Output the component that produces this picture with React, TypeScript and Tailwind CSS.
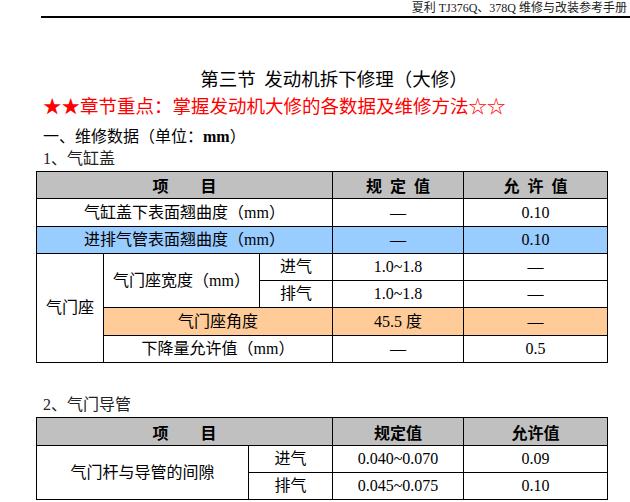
import React from "react";

const serif = "font-['Liberation_Serif','Noto_Sans_CJK_SC',serif]";
const hei = "font-['Noto_Sans_CJK_SC','Liberation_Sans',sans-serif]";

const cell = "border border-black text-center align-middle p-0";

const App = () => {
  return (
    <div className="w-[630px] h-[502px] bg-white overflow-hidden text-black">
      <div
        className={`ml-[41px] h-[18px] border-b-2 border-black flex items-start justify-end pr-[3px] text-[12px] leading-[17px] text-[#222] ${serif}`}
      >
        夏利 TJ376Q、378Q 维修与改装参考手册
      </div>

      <h1 className={`mt-[48px] ml-[41px] mr-[3px] h-6 leading-6 text-center text-[18.5px] font-normal ${hei}`}>
        第三节&nbsp;&nbsp;发动机拆下修理（大修）
      </h1>
      <p className={`ml-[43px] mt-[3px] h-6 leading-6 text-[18.5px] text-[#ff0000] ${hei}`}>
        ★★章节重点：掌握发动机大修的各数据及维修方法☆☆
      </p>
      <p className={`ml-[43px] mt-[6px] h-6 leading-6 text-[16px] ${hei}`}>
        一、维修数据（单位：<span className={`font-bold ${serif}`}>mm</span>）
      </p>
      <p className={`ml-[43px] h-6 leading-6 text-[16px] text-[#222] ${serif}`}>1、气缸盖</p>

      <table className={`ml-[36px] w-[571px] table-fixed border-collapse text-[16px] ${serif}`}>
        <colgroup>
          <col className="w-[67px]" />
          <col className="w-[156px]" />
          <col className="w-[73px]" />
          <col className="w-[131px]" />
          <col className="w-[144px]" />
        </colgroup>
        <tbody>
          <tr className={`h-[27px] bg-[#c0c0c0] font-bold ${hei}`}>
            <td colSpan={3} className={cell}>项　　目</td>
            <td className={cell}>规&ensp;定&ensp;值</td>
            <td className={cell}>允&ensp;许&ensp;值</td>
          </tr>
          <tr className="h-[28px]">
            <td colSpan={3} className={cell}>气缸盖下表面翘曲度（mm）</td>
            <td className={cell}>—</td>
            <td className={cell}>0.10</td>
          </tr>
          <tr className="h-[27px] bg-[#99ccff]">
            <td colSpan={3} className={cell}>进排气管表面翘曲度（mm）</td>
            <td className={cell}>—</td>
            <td className={cell}>0.10</td>
          </tr>
          <tr className="h-[27px]">
            <td rowSpan={4} className={cell}>气门座</td>
            <td rowSpan={2} className={cell}>气门座宽度（mm）</td>
            <td className={cell}>进气</td>
            <td className={cell}>1.0~1.8</td>
            <td className={cell}>—</td>
          </tr>
          <tr className="h-[27px]">
            <td className={cell}>排气</td>
            <td className={cell}>1.0~1.8</td>
            <td className={cell}>—</td>
          </tr>
          <tr className="h-[28px]">
            <td colSpan={2} className={`${cell} bg-[#ffcc99]`}>气门座角度</td>
            <td className={`${cell} bg-[#ffcc99]`}>45.5 度</td>
            <td className={`${cell} bg-[#ffcc99]`}>—</td>
          </tr>
          <tr className="h-[27px]">
            <td colSpan={2} className={cell}>下降量允许值（mm）</td>
            <td className={cell}>—</td>
            <td className={cell}>0.5</td>
          </tr>
        </tbody>
      </table>

      <p className={`ml-[43px] mt-[30px] h-6 leading-6 text-[16px] text-[#222] ${serif}`}>2、气门导管</p>

      <table className={`ml-[36px] w-[571px] table-fixed border-collapse text-[16px] ${serif}`}>
        <colgroup>
          <col className="w-[212px]" />
          <col className="w-[84px]" />
          <col className="w-[131px]" />
          <col className="w-[144px]" />
        </colgroup>
        <tbody>
          <tr className={`h-[28px] bg-[#c0c0c0] font-bold ${hei}`}>
            <td colSpan={2} className={cell}>项　　目</td>
            <td className={cell}>规定值</td>
            <td className={cell}>允许值</td>
          </tr>
          <tr className="h-[27px]">
            <td rowSpan={2} className={cell}>气门杆与导管的间隙</td>
            <td className={cell}>进气</td>
            <td className={cell}>0.040~0.070</td>
            <td className={cell}>0.09</td>
          </tr>
          <tr className="h-[27px]">
            <td className={cell}>排气</td>
            <td className={cell}>0.045~0.075</td>
            <td className={cell}>0.10</td>
          </tr>
        </tbody>
      </table>
    </div>
  );
};

export default App;
